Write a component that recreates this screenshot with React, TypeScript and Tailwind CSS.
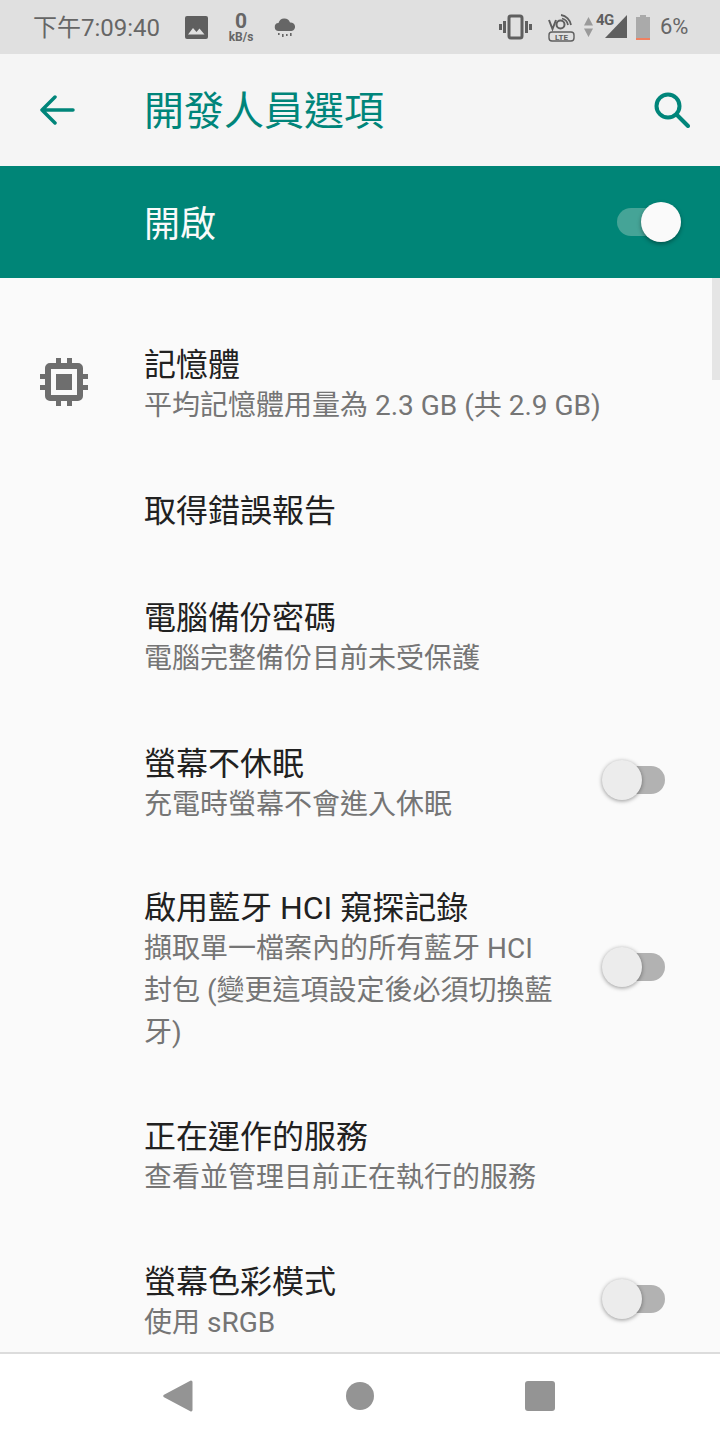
import React from "react";

const FONT = "font-['Roboto','Noto_Sans_CJK_TC',sans-serif]";

function Toggle({ mb }: { mb: string }) {
  return (
    <div className={"relative ml-[46px] h-[28px] w-[64px] shrink-0 " + mb}>
      <div className="absolute left-[8px] top-0 h-[28px] w-[55px] rounded-full bg-[#b2b2b2]" />
      <div className="absolute left-0 top-[-6px] h-[40px] w-[40px] rounded-full bg-[#ececec] shadow-[0_1px_4px_rgba(0,0,0,0.4)]" />
    </div>
  );
}

function Row({
  title,
  sub,
  toggleMb,
  icon,
  pb = "pb-[32px]",
}: {
  title: string;
  sub?: React.ReactNode;
  toggleMb?: string;
  icon?: React.ReactNode;
  pb?: string;
}) {
  return (
    <div className={"flex items-center pt-[32px] " + pb}>
      <div className="flex w-[144px] shrink-0 justify-start pl-[40px]">{icon}</div>
      <div className={toggleMb ? "w-[412px] shrink-0" : "min-w-0 flex-1 pr-[32px]"}>
        <div className="text-[32px] leading-[40px] text-[#212121]">{title}</div>
        {sub && <div className="text-[28px] leading-[42px] text-[#757575]">{sub}</div>}
      </div>
      {toggleMb && <Toggle mb={toggleMb} />}
    </div>
  );
}

export default function App() {
  return (
    <div className={"flex h-[1440px] w-[720px] flex-col overflow-hidden bg-[#fafafa] " + FONT}>
      {/* status bar */}
      <div className="flex h-[54px] shrink-0 items-center bg-[#e0e0e0] text-[#666666]">
        <span className="ml-[33px] mt-[1px] w-[152px] text-[24px] leading-[54px]">下午7:09:40</span>
        <svg width="23" height="23" viewBox="0 0 23 23">
          <rect width="23" height="23" rx="2" fill="#5f5f5f" />
          <path d="M3 18.500l5-6.500 3.500 4 3-3.500 5 6z" fill="#e0e0e0" />
        </svg>
        <div className="ml-[20px] flex w-[26px] flex-col items-center pt-[1px] font-bold">
          <span className="text-[21px] leading-[19px]">0</span>
          <span className="text-[12px] leading-[12px]">kB/s</span>
        </div>
        <svg className="ml-[19px] mt-[2px]" width="24" height="24" viewBox="0 0 24 24" fill="#666666">
          <path d="M6 15a4 4 0 01-.5-8A6 6 0 0117 6.500a4.300 4.300 0 011.500 8.500z" />
          <rect x="5" y="17" width="1.600" height="2" />
          <rect x="9" y="18" width="1.600" height="3" />
          <rect x="13" y="18" width="1.600" height="2" />
          <rect x="17" y="17" width="1.600" height="3" />
        </svg>
        <svg className="ml-[202px]" width="33" height="26" viewBox="0 0 33 26" fill="none" stroke="#5f5f5f">
          <rect x="10" y="2" width="13" height="22" rx="2" strokeWidth="3" />
          <path d="M5.500 7v12M1.500 10v6M27.500 7v12M31.500 10v6" strokeWidth="3" />
        </svg>
        <svg className="ml-[16px]" width="27" height="30" viewBox="0 0 27 30" fill="none" stroke="#5f5f5f">
          <path d="M1 8l3.500 9 3.500-9" strokeWidth="2" />
          <circle cx="12.500" cy="12.500" r="4" strokeWidth="2" />
          <path d="M13 3a12 12 0 0110 10M14 6.500a8 8 0 016 6.500" strokeWidth="1.800" />
          <rect x="1" y="20" width="25" height="9" rx="3" strokeWidth="1.400" />
          <text x="13.500" y="27.500" fontSize="8" fontWeight="700" textAnchor="middle" fill="#5f5f5f" stroke="none">LTE</text>
        </svg>
        <svg className="ml-[9px]" width="9" height="22" viewBox="0 0 9 22" fill="#9a9a9a">
          <path d="M4.500 1L9 9.500H0zM0 12.500h9L4.500 21z" />
        </svg>
        <div className="relative ml-[3px] h-[26px] w-[31px]">
          <svg className="absolute left-0 top-0" width="31" height="26" viewBox="0 0 31 26" fill="#5f5f5f">
            <path d="M31 1v23H9z" />
          </svg>
          <span className="absolute left-0 top-[-3px] text-[15px] font-bold leading-[18px] tracking-[-0.5px] text-[#5f5f5f]">4G</span>
        </div>
        <svg className="ml-[9px]" width="14" height="26" viewBox="0 0 14 26">
          <path d="M4 1h6v2h4v22H0V3h4z" fill="#aaaaaa" />
          <rect y="24" width="14" height="2" fill="#f08060" />
        </svg>
        <span className="ml-[10px] text-[22px] leading-[54px]">6%</span>
      </div>

      {/* toolbar */}
      <div className="flex h-[112px] shrink-0 items-center bg-[#f5f5f5]">
        <div className="flex w-[144px] shrink-0 pl-[40px]">
          <svg width="35" height="30" viewBox="0 0 35 30" fill="none" stroke="#00857a" strokeWidth="3.500" strokeLinecap="round" strokeLinejoin="round">
            <path d="M33 15H2M15 2L2 15l13 13" />
          </svg>
        </div>
        <div className="mt-[3px] w-[510px] text-[40px] leading-[48px] text-[#00857a]">開發人員選項</div>
        <svg width="36" height="36" viewBox="0 0 36 36" fill="none" stroke="#00857a" strokeWidth="4" strokeLinecap="round">
          <circle cx="14" cy="14" r="11.500" />
          <path d="M23 23l11 11" />
        </svg>
      </div>

      {/* master switch */}
      <div className="flex h-[112px] shrink-0 items-center bg-[#008577]">
        <div className="mt-[5px] w-[617px] pl-[144px] text-[36px] leading-[44px] text-[#fafafa]">開啟</div>
        <div className="relative h-[28px] w-[64px]">
          <div className="absolute left-0 top-0 h-[28px] w-[56px] rounded-full bg-[#45a497]" />
          <div className="absolute left-[24px] top-[-6px] h-[40px] w-[40px] rounded-full bg-[#fafafa] shadow-[0_2px_4px_rgba(0,0,0,0.35)]" />
        </div>
      </div>

      {/* list */}
      <div className="relative min-h-0 flex-1 overflow-hidden bg-[#fafafa] pt-[35px]">
        <div className="absolute right-0 top-0 h-[102px] w-[8px] bg-[#e5e5e5]" />
        <Row
          title="記憶體"
          sub="平均記憶體用量為 2.3 GB (共 2.9 GB)"
          icon={
            <svg className="mb-[8px]" width="48" height="48" viewBox="0 0 48 48" fill="#6e6e6e">
              <path
                fillRule="evenodd"
                d="M16 0h5v5h6V0h5v5h6a5 5 0 015 5v6h5v5h-5v6h5v5h-5v6a5 5 0 01-5 5h-6v5h-5v-5h-6v5h-5v-5h-6a5 5 0 01-5-5v-6H0v-5h5v-6H0v-5h5v-6a5 5 0 015-5h6zM11 11v26h26V11z"
              />
              <rect x="16" y="16" width="16" height="16" />
            </svg>
          }
        />
        <Row title="取得錯誤報告" pb="pb-[35px]" />
        <Row title="電腦備份密碼" sub="電腦完整備份目前未受保護" />
        <Row title="螢幕不休眠" sub="充電時螢幕不會進入休眠" toggleMb="mb-[11px]" pb="pb-[30px]" />
        <Row
          title="啟用藍牙 HCI 窺探記錄"
          sub="擷取單一檔案內的所有藍牙 HCI 封包 (變更這項設定後必須切換藍牙)"
          toggleMb="mb-[9px]"
          pb="pb-[31px]"
        />
        <Row title="正在運作的服務" sub="查看並管理目前正在執行的服務" pb="pb-[31px]" />
        <Row title="螢幕色彩模式" sub="使用 sRGB" toggleMb="mb-[9px]" />
      </div>

      {/* nav bar */}
      <div className="flex h-[88px] shrink-0 items-center border-t-2 border-[#dcdcdc] bg-white pb-[2px]">
        <svg className="ml-[163px]" width="30" height="34" viewBox="0 0 30 34" fill="#949494">
          <path d="M28 1.500a1.500 1.500 0 011.500 1.500v28a1.500 1.500 0 01-2.200 1.300L1 18.300a1.500 1.500 0 010-2.600L27.300 1.700z" />
        </svg>
        <div className="ml-[153px] h-[28px] w-[28px] rounded-full bg-[#949494]" />
        <div className="ml-[151px] h-[30px] w-[30px] rounded-[3px] bg-[#949494]" />
      </div>
    </div>
  );
}
